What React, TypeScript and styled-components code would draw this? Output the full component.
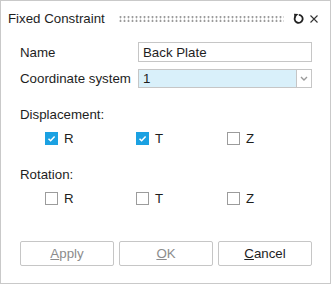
import React from "react";
import styled, { createGlobalStyle } from "styled-components";

const Global = createGlobalStyle`
  html, body { margin: 0; padding: 0; background: #ffffff; }
  body { font-family: "Liberation Sans", Arial, sans-serif; font-size: 13.3px; color: #1e1e1e; }
  * { box-sizing: border-box; }
`;

const Dialog = styled.div`
  width: 331px;
  height: 284px;
  border: 1px solid #c9c9c9;
  background: #ffffff;
  display: flex;
  flex-direction: column;
`;

const TitleBar = styled.div`
  height: 34px;
  display: flex;
  align-items: center;
  padding: 1px 8px 0 7px;
`;

const Title = styled.span`
  color: #1e1e1e;
  white-space: nowrap;
`;

const Grip = styled.div`
  flex: 1;
  height: 6px;
  margin: 0 6px 0 14px;
  background-image: radial-gradient(circle at 1.5px 1.5px, #7a7a7a 0.9px, transparent 1.1px);
  background-size: 4px 4px;
  background-position: 0 -0.5px;
`;

const IconButton = styled.span`
  width: 16px;
  height: 16px;
  display: flex;
  align-items: center;
  justify-content: center;
  color: #333;
`;

const Body = styled.div`
  flex: 1;
  display: flex;
  flex-direction: column;
  padding: 7px 18px 17px 19px;
`;

const FormGrid = styled.div`
  display: grid;
  grid-template-columns: 118px 174px;
  row-gap: 7px;
  align-items: center;
`;

const Label = styled.label`
  white-space: nowrap;
`;

const TextInput = styled.div`
  height: 20px;
  border: 1px solid #c6c6c6;
  padding: 0 4px;
  display: flex;
  align-items: center;
`;

const Combo = styled.div`
  height: 19px;
  border: 1px solid #c6c6c6;
  display: flex;
`;

const ComboValue = styled.div`
  flex: 1;
  background: #d9f0fa;
  padding: 0 4px;
  display: flex;
  align-items: center;
  border-right: 1px solid #c6c6c6;
`;

const ComboButton = styled.div`
  width: 14px;
  display: flex;
  align-items: center;
  justify-content: center;
`;

const Section = styled.div<{ $top: number }>`
  margin-top: ${(p) => p.$top}px;
`;

const SectionTitle = styled.div`
  line-height: 15px;
`;

const CheckRow = styled.div`
  display: grid;
  grid-template-columns: repeat(3, 91px);
  padding-left: 25px;
  margin-top: 9px;
`;

const CheckItem = styled.div`
  display: flex;
  align-items: center;
  gap: 6px;
  height: 15px;
`;

const Box = styled.span<{ $checked: boolean }>`
  width: 13px;
  height: 13px;
  display: flex;
  align-items: center;
  justify-content: center;
  background: ${(p) => (p.$checked ? "#1ba1e2" : "#ffffff")};
  border: 1px solid ${(p) => (p.$checked ? "#1ba1e2" : "#9c9c9c")};
`;

const ButtonRow = styled.div`
  margin-top: auto;
  display: flex;
  gap: 5px;
`;

const Button = styled.div<{ $disabled?: boolean }>`
  width: 94px;
  height: 25px;
  border: 1px solid #c6c6c6;
  border-radius: 2px;
  display: flex;
  align-items: center;
  justify-content: center;
  color: ${(p) => (p.$disabled ? "#8c8c8c" : "#1e1e1e")};
`;

const U = styled.span`
  text-decoration: underline;
`;

function Check({ checked, label }: { checked: boolean; label: string }) {
  return (
    <CheckItem>
      <Box $checked={checked}>
        {checked && (
          <svg width="9" height="9" viewBox="0 0 9 9">
            <path d="M1.5 4.8 L3.6 6.8 L7.6 2.4" fill="none" stroke="#fff" strokeWidth="1.5" />
          </svg>
        )}
      </Box>
      <span>{label}</span>
    </CheckItem>
  );
}

export default function App() {
  return (
    <>
      <Global />
      <Dialog>
        <TitleBar>
          <Title>Fixed Constraint</Title>
          <Grip />
          <IconButton>
            <svg width="11" height="11" viewBox="0 0 11 11">
              <path d="M2.6 3.2 A4 4 0 1 0 5.8 1.8" fill="none" stroke="#222" strokeWidth="1.8" />
              <path d="M1 0.8 L5.4 1 L1.6 5 Z" fill="#222" />
            </svg>
          </IconButton>
          <IconButton>
            <svg width="10" height="10" viewBox="0 0 10 10">
              <path d="M1.5 1.5 L8.5 8.5 M8.5 1.5 L1.5 8.5" stroke="#333" strokeWidth="1.1" />
            </svg>
          </IconButton>
        </TitleBar>
        <Body>
          <FormGrid>
            <Label>Name</Label>
            <TextInput>Back Plate</TextInput>
            <Label>Coordinate system</Label>
            <Combo>
              <ComboValue>1</ComboValue>
              <ComboButton>
                <svg width="8" height="6" viewBox="0 0 8 6">
                  <path d="M1 1 L4 4 L7 1" fill="none" stroke="#9a9a9a" strokeWidth="1.4" />
                </svg>
              </ComboButton>
            </Combo>
          </FormGrid>
          <Section $top={19}>
            <SectionTitle>Displacement:</SectionTitle>
            <CheckRow>
              <Check checked label="R" />
              <Check checked label="T" />
              <Check checked={false} label="Z" />
            </CheckRow>
          </Section>
          <Section $top={21}>
            <SectionTitle>Rotation:</SectionTitle>
            <CheckRow>
              <Check checked={false} label="R" />
              <Check checked={false} label="T" />
              <Check checked={false} label="Z" />
            </CheckRow>
          </Section>
          <ButtonRow>
            <Button $disabled>
              <span><U>A</U>pply</span>
            </Button>
            <Button $disabled>
              <span><U>O</U>K</span>
            </Button>
            <Button>
              <span><U>C</U>ancel</span>
            </Button>
          </ButtonRow>
        </Body>
      </Dialog>
    </>
  );
}
